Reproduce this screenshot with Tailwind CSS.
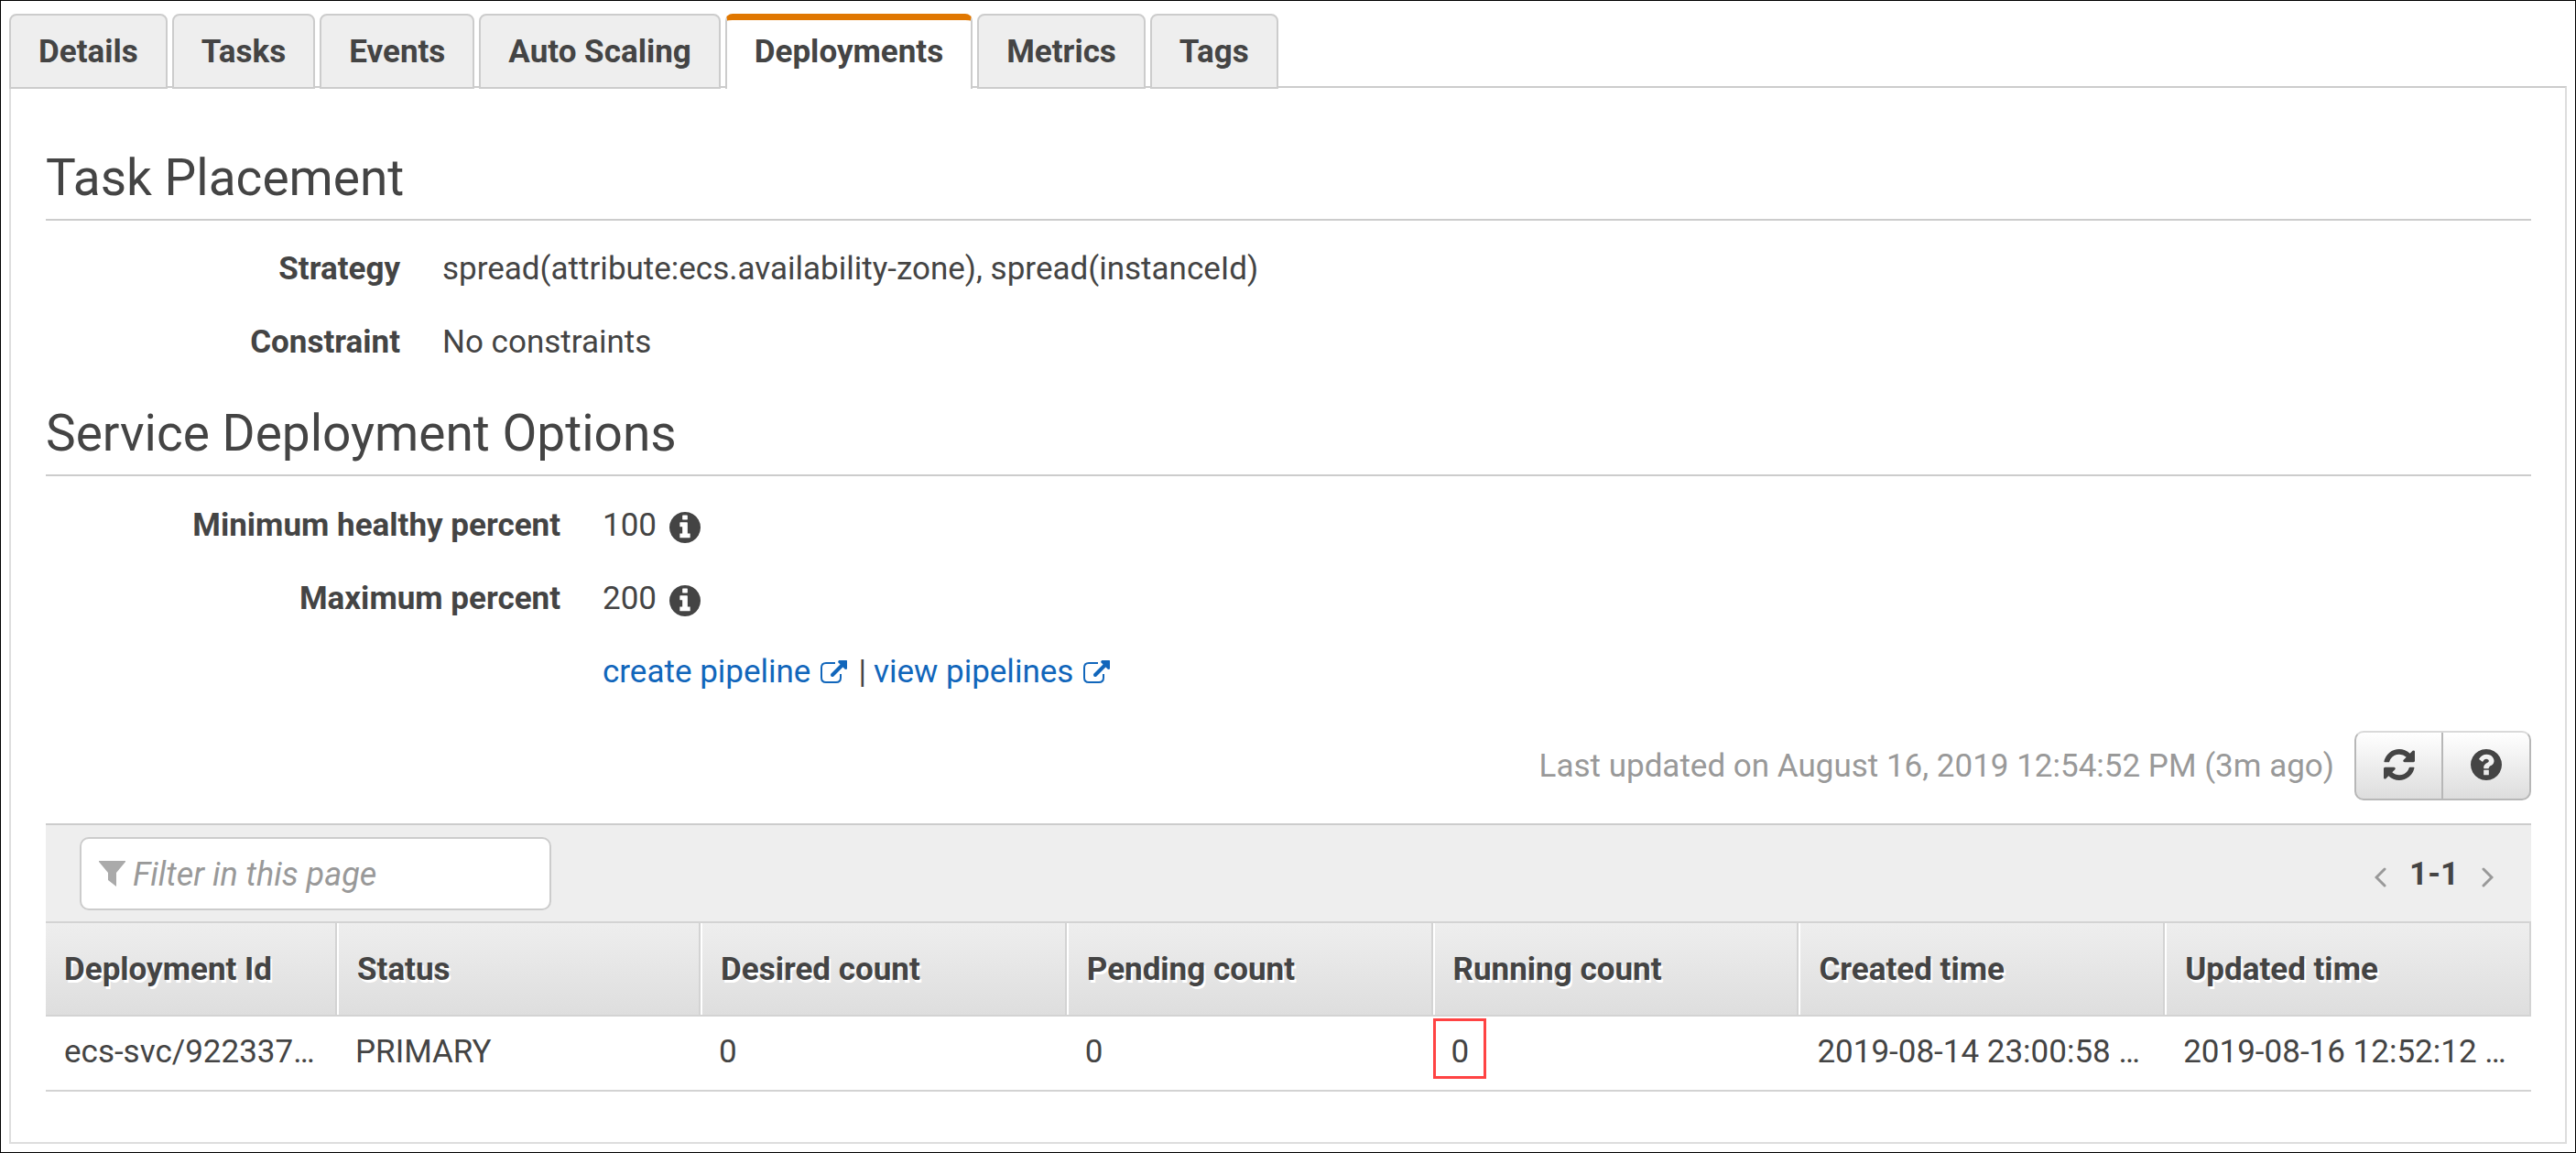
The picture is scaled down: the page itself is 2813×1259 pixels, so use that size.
<!DOCTYPE html>
<html lang="en">
<head>
<meta charset="utf-8">
<title>Service deployments</title>
<script src="https://cdn.jsdelivr.net/npm/@tailwindcss/browser@4"></script>
</head>
<body class="flex min-h-screen flex-col border border-black bg-white px-[9px] pt-[14px] pb-[9px] font-['Roboto',sans-serif] text-[35px] leading-[42px] text-[#444]">

<svg class="hidden" aria-hidden="true">
  <symbol id="info" viewBox="128 128 1536 1536"><path d="M1152 1376v-160q0-14-9-23t-23-9h-96v-512q0-14-9-23t-23-9h-320q-14 0-23 9t-9 23v160q0 14 9 23t23 9h96v320h-96q-14 0-23 9t-9 23v160q0 14 9 23t23 9h448q14 0 23-9t9-23zm-128-896v-160q0-14-9-23t-23-9h-192q-14 0-23 9t-9 23v160q0 14 9 23t23 9h192q14 0 23-9t9-23zm640 416q0 209-103 385.5t-279.5 279.5-385.5 103-385.5-103-279.5-279.5-103-385.5 103-385.5 279.5-279.5 385.5-103 385.5 103 279.5 279.5 103 385.5z"/></symbol>
  <symbol id="external" viewBox="0 0 29 26"><path fill="none" stroke="currentColor" stroke-width="2" d="M16 3H6Q1 3 1 8V19Q1 24 6 24H17Q22 24 22 19V15"/><path fill="none" stroke="currentColor" stroke-width="4" stroke-linecap="round" d="M13 16L25 4"/><path d="M20 0H28.500Q29 0 29 0.500V9.500L27 10L19 2z"/></symbol>
</svg>

<nav role="tablist" aria-label="Service" class="relative z-10 -mb-[3px] flex gap-[5px] font-bold">
  <button role="tab" class="h-[82px] rounded-t-[8px] border-2 border-[#ccc] bg-[#eee] px-[30px] pt-[2px]">Details</button>
  <button role="tab" class="h-[82px] rounded-t-[8px] border-2 border-[#ccc] bg-[#eee] px-[30px] pt-[2px]">Tasks</button>
  <button role="tab" class="h-[82px] rounded-t-[8px] border-2 border-[#ccc] bg-[#eee] px-[30px] pt-[2px]">Events</button>
  <button role="tab" class="h-[82px] rounded-t-[8px] border-2 border-[#ccc] bg-[#eee] px-[30px] pt-[2px]">Auto Scaling</button>
  <button role="tab" aria-selected="true" class="h-[82px] rounded-t-[8px] border-x-2 border-t-[7px] border-x-[#ccc] border-t-[#e07700] bg-white px-[30px] pb-[5px]">Deployments</button>
  <button role="tab" class="h-[82px] rounded-t-[8px] border-2 border-[#ccc] bg-[#eee] px-[30px] pt-[2px]">Metrics</button>
  <button role="tab" class="h-[82px] rounded-t-[8px] border-2 border-[#ccc] bg-[#eee] px-[30px] pt-[2px]">Tags</button>
</nav>

<main class="flex-1 border-2 border-[#ddd] border-t-[#ccc] pt-[68px] pr-[37px] pb-[55px] pl-[38px]">
  <h2 class="border-b-2 border-[#ccc] pb-[15px] text-[55px] leading-[60px]">Task Placement</h2>
  <dl class="mt-[13px] grid grid-cols-[387px_1fr] gap-x-[46px] leading-[80px]">
    <dt class="text-right font-bold">Strategy</dt>
    <dd>spread(attribute:ecs.availability-zone), spread(instanceId)</dd>
    <dt class="text-right font-bold">Constraint</dt>
    <dd>No constraints</dd>
  </dl>

  <h2 class="mt-[29px] border-b-2 border-[#ccc] pb-[15px] text-[55px] leading-[60px]">Service Deployment Options</h2>
  <dl class="mt-[14px] grid grid-cols-[562px_1fr] gap-x-[46px] leading-[80px]">
    <dt class="text-right font-bold">Minimum healthy percent</dt>
    <dd class="flex items-center gap-[14px]">100 <svg class="mt-1 size-[34px] fill-current" role="img" aria-label="Info"><use href="#info"/></svg></dd>
    <dt class="text-right font-bold">Maximum percent</dt>
    <dd class="flex items-center gap-[14px]">200 <svg class="mt-1 size-[34px] fill-current" role="img" aria-label="Info"><use href="#info"/></svg></dd>
    <dd class="col-start-2 flex items-center gap-2">
      <a href="#" class="flex items-center gap-[11px] text-[#1166bb]">create pipeline <svg class="h-[26px] w-[29px] fill-current"><use href="#external"/></svg></a>
      <span class="pl-1">|</span>
      <a href="#" class="flex items-center gap-[11px] text-[#1166bb]">view pipelines <svg class="h-[26px] w-[29px] fill-current"><use href="#external"/></svg></a>
    </dd>
  </dl>

  <div class="mt-[24px] mb-[25px] flex items-center justify-end gap-[22px]">
    <p class="pt-[2px] text-[#999]">Last updated on August 16, 2019 12:54:52 PM (3m ago)</p>
    <div class="flex h-[76px] overflow-hidden rounded-[10px] border-2 border-[#b7b7b7] border-t-[#d9d9d9] bg-linear-to-b from-white to-[#ddd]">
      <button aria-label="Refresh" class="flex w-[95px] items-center justify-center border-r-2 border-[#b7b7b7] pb-[2px]"><svg class="size-[34px] fill-current" viewBox="0 0 1536 1536"><path d="M1511 928q0 5-1 7-64 268-268 434.500t-478 166.500q-146 0-282.500-55t-243.500-157l-129 129q-19 19-45 19t-45-19-19-45v-448q0-26 19-45t45-19h448q26 0 45 19t19 45-19 45l-137 137q71 66 161 102t187 36q134 0 250-65t186-179q11-17 53-117 8-23 30-23h192q13 0 22.500 9.500t9.500 22.500zm25-800v448q0 26-19 45t-45 19h-448q-26 0-45-19t-19-45 19-45l138-138q-148-137-349-137-134 0-250 65t-186 179q-11 17-53 117-8 23-30 23h-199q-13 0-22.500-9.500t-9.500-22.500v-7q65-268 270-434.500t480-166.500q146 0 284 55.500t245 156.500l130-129q19-19 45-19t45 19 19 45z"/></svg></button>
      <button aria-label="Help" class="flex w-[94px] items-center justify-center pb-[2px]"><svg class="size-[34px] fill-current" viewBox="128 128 1536 1536"><path d="M1024 1376v-192q0-14-9-23t-23-9h-192q-14 0-23 9t-9 23v192q0 14 9 23t23 9h192q14 0 23-9t9-23zm256-672q0-88-55.500-163t-138.500-116-170-41q-243 0-371 213-15 24 8 42l132 100q7 6 19 6 16 0 25-12 53-68 86-92 34-24 86-24 48 0 85.500 26t37.500 59q0 38-20 61t-68 45q-63 28-115.500 86.500t-52.500 125.500v36q0 14 9 23t23 9h192q14 0 23-9t9-23q0-19 21.500-49.500t54.500-49.500q32-18 49-28.500t46-35 44.500-48 28-60.500 12.500-81zm384 192q0 209-103 385.500t-279.500 279.500-385.500 103-385.500-103-279.500-279.500-103-385.500 103-385.500 279.500-279.500 385.500-103 385.500 103 279.500 279.500 103 385.500z"/></svg></button>
    </div>
  </div>

  <div class="flex items-center justify-between border-t-2 border-[#ccc] bg-[#eee] pt-[13px] pr-[41px] pb-3 pl-[37px]">
    <label class="flex h-[80px] w-[515px] items-center gap-2 rounded-[10px] border-2 border-[#ccc] bg-white pl-[19px]">
      <svg class="h-[28px] w-[29px] shrink-0 fill-[#aaa]" viewBox="0 0 29 28"><path d="M0 0H29V1L19 13V28L10 21V13L0 1z"/></svg>
      <input type="text" aria-label="Filter" placeholder="Filter in this page" class="min-w-0 flex-1 pt-[2px] text-[36px] italic outline-none placeholder:text-[#999]">
    </label>
    <div class="flex items-center gap-[25px]">
      <button aria-label="Previous page"><svg class="mt-2 h-[22px] w-[13px] fill-none stroke-[#999] stroke-[3]" viewBox="0 0 13 22" stroke-linecap="round"><path d="M11 2L2 11L11 20"/></svg></button>
      <span class="pt-[2px] font-bold">1-1</span>
      <button aria-label="Next page"><svg class="mt-2 h-[22px] w-[13px] fill-none stroke-[#999] stroke-[3]" viewBox="0 0 13 22" stroke-linecap="round"><path d="M2 2L11 11L2 20"/></svg></button>
    </div>
  </div>

  <table class="w-full table-fixed border-separate border-spacing-0 text-left">
    <thead>
      <tr class="h-[104px] [text-shadow:2px_3px_0_#fff] [&>th]:border-y-2 [&>th]:border-r-2 [&>th]:border-[#d3d3d3] [&>th]:bg-linear-to-b [&>th]:from-[#eee] [&>th]:to-[#dedede] [&>th]:pt-[2px]">
        <th class="w-[318px] pl-[20px]">Deployment Id</th>
        <th class="w-[397px] pl-[22px] shadow-[inset_2px_0_0_#fff]">Status</th>
        <th class="pl-[22px] shadow-[inset_2px_0_0_#fff]">Desired count</th>
        <th class="pl-[22px] shadow-[inset_2px_0_0_#fff]">Pending count</th>
        <th class="pl-[22px] shadow-[inset_2px_0_0_#fff]">Running count</th>
        <th class="pl-[22px] shadow-[inset_2px_0_0_#fff]">Created time</th>
        <th class="pl-[22px] shadow-[inset_2px_0_0_#fff]">Updated time</th>
      </tr>
    </thead>
    <tbody>
      <tr class="h-[82px] [&>td]:border-b-2 [&>td]:border-[#d3d3d3] [&>td]:pb-[2px] [&>td]:pl-[20px]">
        <td>ecs-svc/922337…</td>
        <td>PRIMARY</td>
        <td>0</td>
        <td>0</td>
        <td class="relative">0<span class="absolute top-[2px] left-0 h-[66px] w-[58px] border-3 border-[#ff4343]"></span></td>
        <td>2019-08-14 23:00:58 …</td>
        <td>2019-08-16 12:52:12 …</td>
      </tr>
    </tbody>
  </table>
</main>
</body>
</html>
